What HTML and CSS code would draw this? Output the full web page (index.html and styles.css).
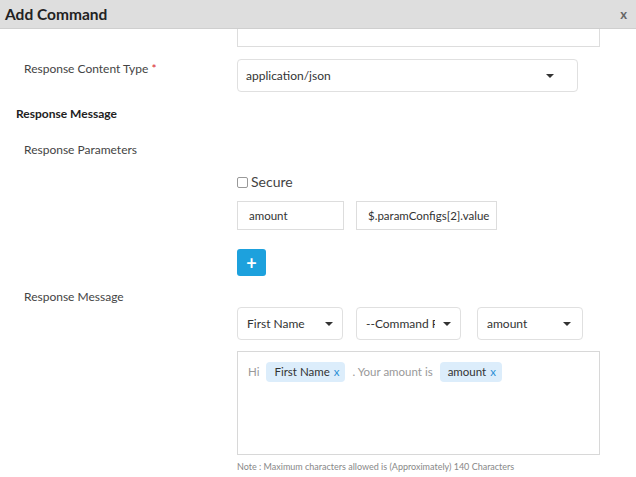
FILE: index.html
```html
<!DOCTYPE html>
<html>
<head>
<meta charset="utf-8">
<link rel="stylesheet" href="styles.css">
</head>
<body>
<div class="modal">
  <div class="header">
    <span class="title">Add Command</span>
    <span class="close">x</span>
  </div>
  <div class="body">
    <div class="row top-row">
      <div class="label"></div>
      <div class="control"><div class="cut-input"></div></div>
    </div>
    <div class="row r-type">
      <div class="label">Response Content Type <span class="req">*</span></div>
      <div class="control">
        <div class="select wide"><span>application/json</span><span class="caret"></span></div>
      </div>
    </div>
    <div class="section">Response Message</div>
    <div class="row r-params">
      <div class="label">Response Parameters</div>
    </div>
    <div class="row r-secure">
      <div class="label"></div>
      <div class="control secure"><span class="checkbox"></span><span>Secure</span></div>
    </div>
    <div class="row r-inputs">
      <div class="label"></div>
      <div class="control inputs">
        <div class="input i1">amount</div>
        <div class="input i2">$.paramConfigs[2].value</div>
      </div>
    </div>
    <div class="row r-plus">
      <div class="label"></div>
      <div class="control"><div class="plus">+</div></div>
    </div>
    <div class="row r-msg">
      <div class="label">Response Message</div>
    </div>
    <div class="row r-selects">
      <div class="label"></div>
      <div class="control selects">
        <div class="select s1"><span>First Name</span><span class="caret"></span></div>
        <div class="select s2"><span class="clip">--Command Parameters--</span><span class="caret"></span></div>
        <div class="select s3"><span>amount</span><span class="caret"></span></div>
      </div>
    </div>
    <div class="row r-text">
      <div class="label"></div>
      <div class="control">
        <div class="textarea">
          <span class="plain">Hi</span>
          <span class="tag">First Name <span class="tx">x</span></span>
          <span class="plain">. Your amount is</span>
          <span class="tag">amount <span class="tx">x</span></span>
        </div>
        <div class="note">Note : Maximum characters allowed is (Approximately) 140 Characters</div>
      </div>
    </div>
  </div>
</div>
</body>
</html>
```

FILE: styles.css
```css
html, body {
  margin: 0;
  padding: 0;
  background: #fff;
}
body {
  font-family: Lato, "Open Sans", sans-serif;
  width: 636px;
  height: 477px;
  overflow: hidden;
}
.header {
  height: 29px;
  background: #dedede;
  border-bottom: 1px solid #cfcfcf;
  display: flex;
  align-items: center;
  justify-content: space-between;
  padding: 0 9px 0 5px;
  box-sizing: border-box;
}
.title {
  font-weight: 700;
  font-size: 15.5px;
  color: #222;
}
.close {
  font-weight: 700;
  font-size: 13px;
  color: #666;
}
.row {
  display: flex;
  align-items: flex-start;
}
.label {
  width: 213px;
  padding-left: 24px;
  font-size: 12px;
  line-height: 16px;
  color: #444;
  flex: none;
}
.req { color: #d9262a; }
.cut-input {
  width: 363px;
  height: 18px;
  border: 1px solid #ddd;
  border-top: none;
  box-sizing: border-box;
}
.r-type { margin-top: 12px; }
.r-type .label { padding-top: 2px; }
.select {
  height: 33px;
  border: 1px solid #e0e0e0;
  border-radius: 4px;
  box-sizing: border-box;
  display: flex;
  align-items: center;
  justify-content: space-between;
  padding: 0 9px 0 9px;
  font-size: 12px;
  color: #333;
}
.select.wide { width: 341px; padding: 0 23px 0 8px; }
.caret {
  width: 0;
  height: 0;
  border-left: 4px solid transparent;
  border-right: 4px solid transparent;
  border-top: 4px solid #333;
  flex: none;
}
.section {
  margin-top: 14px;
  padding-left: 16px;
  font-size: 12px;
  line-height: 16px;
  font-weight: 700;
  color: #222;
}
.r-params { margin-top: 20px; }
.r-secure { margin-top: 15px; }
.secure {
  display: flex;
  align-items: center;
  font-size: 14px;
  line-height: 18px;
  color: #444;
}
.checkbox {
  width: 9px;
  height: 9px;
  border: 1px solid #999;
  border-radius: 2px;
  margin-right: 3px;
}
.r-inputs { margin-top: 10px; }
.inputs { display: flex; gap: 12px; }
.input {
  height: 29px;
  border: 1px solid #ddd;
  box-sizing: border-box;
  display: flex;
  align-items: center;
  padding-left: 11px;
  font-size: 11.5px;
  color: #333;
}
.i1 { width: 107px; }
.i2 { width: 141px; }
.r-plus { margin-top: 19px; }
.plus {
  width: 29px;
  height: 27px;
  background: #1da1dd;
  border-radius: 3px;
  color: #fff;
  font-weight: 700;
  font-size: 18px;
  display: flex;
  align-items: center;
  justify-content: center;
  line-height: 1;
}
.r-msg { margin-top: 13px; }
.r-selects { margin-top: 2px; }
.selects { display: flex; }
.s1 { width: 106px; }
.s2 { width: 105px; margin-left: 13px; padding-right: 9px; }
.s3 { width: 106px; margin-left: 16px; padding-right: 11px; }
.clip {
  width: 69px;
  overflow: hidden;
  white-space: nowrap;
  flex: none;
}
.r-text { margin-top: 11px; }
.textarea {
  width: 363px;
  height: 104px;
  border: 1px solid #d8d8d8;
  box-sizing: border-box;
  padding: 10px 0 0 10px;
  display: flex;
  align-items: flex-start;
  font-size: 11.5px;
}
.plain {
  color: #999;
  line-height: 20px;
  margin-right: 7px;
}
.tag {
  background: #dcedfb;
  border-radius: 4px;
  height: 20px;
  line-height: 20px;
  padding: 0 6px 0 8px;
  color: #333;
  margin-right: 7px;
}
.tx { color: #2a8fd6; margin-left: 1px; }
.note {
  margin-top: 6px;
  font-size: 9px;
  color: #888;
}
```
